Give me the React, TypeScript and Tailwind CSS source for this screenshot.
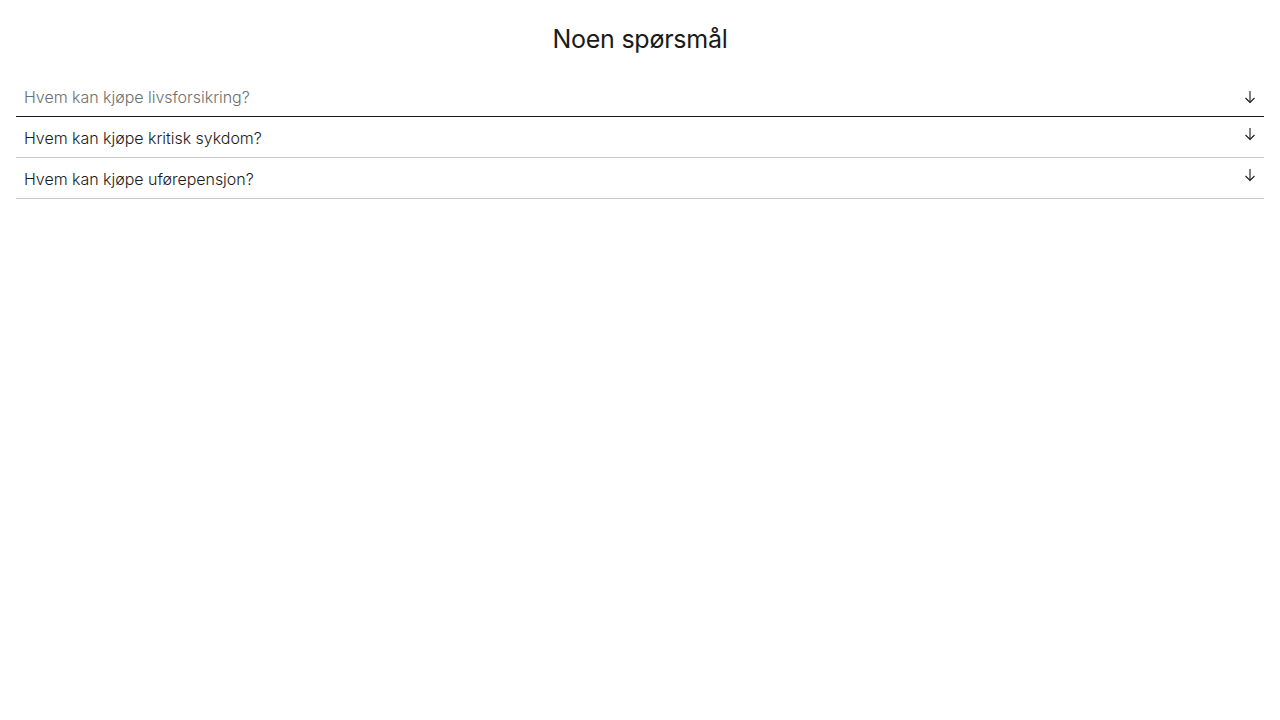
import { useState } from "react"

const questions = [
  "Hvem kan kjøpe livsforsikring?",
  "Hvem kan kjøpe kritisk sykdom?",
  "Hvem kan kjøpe uførepensjon?",
]

function ArrowDown() {
  return (
    <svg width="12" height="14" viewBox="0 0 12 14" fill="none" stroke="currentColor" strokeWidth="1.1">
      <path d="M6 1v11.5" />
      <path d="M1.5 8l4.5 4.5L10.5 8" />
    </svg>
  )
}

export default function App() {
  const [open, setOpen] = useState<number | null>(null)
  const hovered = 0

  return (
    <div className="min-h-screen bg-white px-4 text-[#1a1a1a]" style={{ fontFamily: "Inter, 'Noto Sans', sans-serif" }}>
      <h2 className="pt-[23px] text-center text-[25px] leading-[32px] font-normal tracking-[-0.25px]">Noen spørsmål</h2>
      <div className="mt-[21px]">
        {questions.map((q, i) => (
          <button
            key={q}
            onClick={() => setOpen(open === i ? null : i)}
            className={
              i === hovered
                ? "flex h-[41px] w-full items-center justify-between border-b border-[#1a1a1a] pl-2 pr-2 text-left"
                : "flex h-[41px] w-full items-center justify-between border-b border-[#c8c8c8] pl-2 pr-2 text-left"
            }
          >
            <span
              className={
                i === hovered
                  ? "pt-[1px] text-[16px] leading-[24px] font-light tracking-[-0.03px] text-[#6e6e6e]"
                  : "pt-[1px] text-[16px] leading-[24px] font-light tracking-[-0.03px] text-[#1a1a1a]"
              }
            >
              {q}
            </span>
            <span className={i === hovered ? "pt-[1px] text-[#1a1a1a]" : "-mt-[7px] text-[#1a1a1a]"}>
              <ArrowDown />
            </span>
          </button>
        ))}
      </div>
    </div>
  )
}
